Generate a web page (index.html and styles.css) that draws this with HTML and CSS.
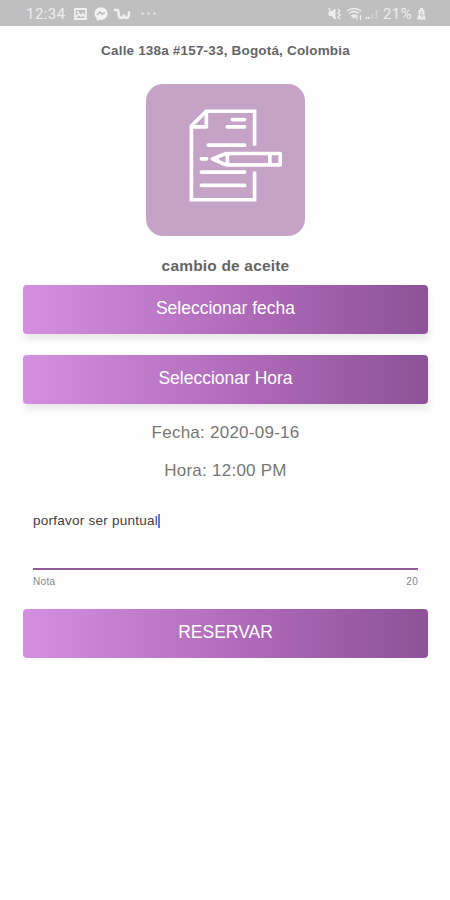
FILE: index.html
```html
<!DOCTYPE html>
<html lang="es">
<head>
<meta charset="utf-8">
<meta name="viewport" content="width=device-width, initial-scale=1">
<title>Reservar</title>
<link rel="stylesheet" href="styles.css">
</head>
<body>
<header class="status">
  <span class="clock">12:34</span>
  <svg class="notices" width="86" height="16" viewBox="0 0 86 16" fill="none">
    <path d="M2 3h11v10H2z M3 11l3-3 2 2 2-2 2 3" stroke="#efefef" stroke-width="1.8"/>
    <path d="M4 5h2v2H4z" fill="#efefef"/>
    <path d="M28 1.500c-4 0-6.500 2.700-6.500 6 0 2 .9 3.700 2.300 4.800V15l2.300-1.300c4.800 1.200 8.400-2 8.400-6.200 0-3.300-2.500-6-6.500-6z" fill="#f3f3f3"/>
    <path d="M24 9l3-3 2.200 2.200L32 6.500" stroke="#bfbfbf" stroke-width="1.700"/>
    <path d="M42 4h2c1.500 0 1.500 1 1.500 2.500 0 4 1.200 5.500 2.800 5.500s2.700-1.500 2.700-3.500c0 2 .8 3.500 2.500 3.500S56 10 56 6.500" stroke="#f0f0f0" stroke-width="2.600" stroke-linecap="round"/>
    <g fill="#eee"><circle cx="69.500" cy="7.500" r="1.100"/><circle cx="75.500" cy="7.500" r="1.100"/><circle cx="81.500" cy="7.500" r="1.100"/></g>
  </svg>
  <svg class="signals" width="54" height="16" viewBox="0 0 54 16" fill="none" stroke="#eee">
    <path d="M2 6h2.500L8 3v10l-3.500-3.500H2z" fill="#eee"/>
    <path d="M1.500 2L9 13M11 3l2 2-2 2 2 2-2 2 2 2" stroke-width="1.300"/>
    <path d="M20 5q7-5 14 0M22 7.500q5-4 10 0M24.500 10q2.500-2 5 0" stroke-width="1.500"/>
    <path d="M27 12l-2-2h4zM30 9v5M33.500 14V9" stroke-width="1.200"/>
    <path d="M39.500 13v-2M42 13v-2" stroke-width="1.600"/>
    <path d="M45.500 13V8M49.500 13V4" stroke="#d0d0d0" stroke-width="2"/>
  </svg>
  <span class="percent">21%</span>
  <svg class="battery" width="9" height="12" viewBox="0 0 9 12">
    <path d="M3 0h3v2h1.500v5L9 11.500H0L1.500 7V2H3z" fill="#ededed"/>
    <path d="M5 3L3 7h3L4.500 10" fill="none" stroke="#bfbfbf"/>
  </svg>
</header>
<main class="booking">
  <p class="address">Calle 138a #157-33, Bogotá, Colombia</p>
  <svg class="service" viewBox="35 25 477 457" fill="none" stroke="#fff" stroke-width="11" stroke-linecap="round" stroke-linejoin="round">
    <path d="M361 211V107H215L171 151V373H361V288" stroke-linecap="butt" stroke-linejoin="miter"/>
    <path d="M216 110V154H174"/>
    <path d="M294 132H331M279 154H331M222 209H331M201 250H217M201 290H331M201 330H331"/>
    <path d="M234 250L275 234H438V268H275ZM279 236V266M407 234V268"/>
    <path d="M234 250L253 243V257Z" fill="#fff" stroke-width="3"/>
  </svg>
  <h1 class="title">cambio de aceite</h1>
  <button class="action">Seleccionar fecha</button>
  <button class="action action-time">Seleccionar Hora</button>
  <p class="detail date">Fecha: 2020-09-16</p>
  <p class="detail time">Hora: 12:00 PM</p>
  <section class="note">
    <div class="entry"><span>porfavor ser puntual</span><i class="caret"></i></div>
    <div class="helper"><span>Nota</span><span class="count">20</span></div>
  </section>
  <button class="action reserve">RESERVAR</button>
</main>
</body>
</html>
```

FILE: styles.css
```css
* { box-sizing: border-box; }
body {
  margin: 0;
  min-height: 900px;
  background: #fefefe;
  color: #656565;
  font-family: "Liberation Sans", sans-serif;
}
p, h1 { margin: 0; white-space: nowrap; }
.status {
  display: flex;
  align-items: center;
  height: 26px;
  padding: 2px 24px 0 26px;
  background: #bfbfbf;
  color: #eee;
  font: 15px/24px Roboto, sans-serif;
}
.clock { width: 47px; letter-spacing: .45px; }
.signals { margin-left: auto; }
.percent { width: 31px; margin-left: 2px; letter-spacing: .4px; }
.battery { margin-left: 3px; }
.booking {
  display: flex;
  flex-direction: column;
  align-items: center;
  padding: 0 22px 0 23px;
}
.address {
  margin-top: 16px;
  font-size: 13.5px;
  line-height: 18px;
  font-weight: 700;
  letter-spacing: .18px;
}
.service {
  width: 159px;
  height: 152px;
  margin-top: 24px;
  border-radius: 17px;
  background: #c4a3c6;
}
.title {
  height: 20px;
  margin-top: 20px;
  font-size: 15.5px;
  line-height: 20px;
  letter-spacing: .18px;
}
.action {
  width: 405px;
  height: 49px;
  margin-top: 9px;
  padding: 0 0 3px;
  border: 0;
  border-radius: 4px;
  background: linear-gradient(90deg, #d48fe1, #ad69b7 57%, #8d5298);
  box-shadow: 1px 5px 7px rgba(0, 0, 0, .09);
  color: #fff;
  font: 17.5px/20px "Liberation Sans", sans-serif;
}
.action-time { margin-top: 21px; }
.detail {
  font-size: 17px;
  line-height: 20px;
  letter-spacing: .25px;
  color: #777;
}
.date { margin-top: 19px; }
.time { margin-top: 18px; }
.note { width: 385px; margin-top: 29px; }
.entry {
  display: flex;
  align-items: flex-start;
  height: 60px;
  padding-top: 2px;
  border-bottom: 2px solid #8f5c95;
  color: #3f3f3f;
  font-size: 13.5px;
  line-height: 18px;
  letter-spacing: .25px;
}
.caret { width: 2px; height: 14px; margin-top: 2px; background: #4c83d5; }
.helper {
  display: flex;
  justify-content: space-between;
  margin-top: 5px;
  color: #858585;
  font-size: 10px;
  line-height: 14px;
}
.helper span { letter-spacing: .3px; }
.reserve { margin-top: 20px; box-shadow: 1px 2px 5px rgba(0, 0, 0, .03); }
```
